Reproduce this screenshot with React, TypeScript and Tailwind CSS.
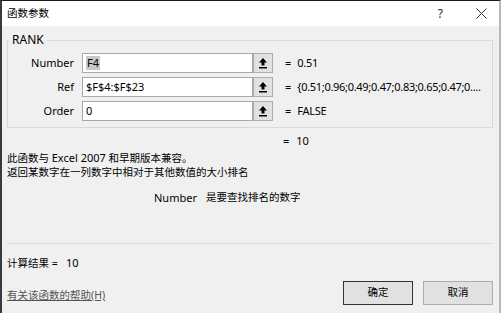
import React from "react";

const font = { fontFamily: '"Noto Sans", "Noto Sans CJK SC", sans-serif' };

function RefIcon() {
  return (
    <svg width="10" height="12" viewBox="0 0 10 12">
      <path d="M5 1 L9 5.5 L6.5 5.5 L6.5 8.5 L3.5 8.5 L3.5 5.5 L1 5.5 Z" fill="#000" />
      <rect x="1" y="10" width="8" height="1.5" fill="#000" />
    </svg>
  );
}

function Row({ label, value, result, selected }: { label: string; value: string; result: string; selected?: boolean }) {
  return (
    <div className="flex items-center h-[20px]">
      <div className="w-[66px] text-right text-[11px] text-black">{label}</div>
      <div className="ml-[8px] flex h-[20px] w-[171px] items-center border border-[#a8a8a8] bg-white pl-[3px] text-[11px] text-black">
        {selected ? <span className="bg-[#c8c8c8] px-[1px] leading-[14px]">{value}</span> : <span className="leading-[14px]">{value}</span>}
      </div>
      <div className="flex h-[20px] w-[20px] items-center justify-center border border-[#adadad] bg-[#e1e1e1]">
        <RefIcon />
      </div>
      <div className="ml-[12px] text-[11px] text-black">=</div>
      <div className="ml-[6px] text-[11px] tracking-[-0.3px] text-black whitespace-nowrap">{result}</div>
    </div>
  );
}

export default function App() {
  return (
    <div className="w-[501px] h-[313px] overflow-hidden bg-[#f0f0f0] border-t border-t-[#1a1a1a] border-l-2 border-l-[#3a3a3a] border-r-2 border-r-[#b8b8b8] flex flex-col text-black" style={font}>
      <div className="h-[25px] bg-white flex items-center pl-[5px] pr-[12px] text-[10.5px] shrink-0">
        <span>函数参数</span>
        <span className="ml-auto text-[12px] text-[#222]">?</span>
        <svg className="ml-[33px]" width="11" height="11" viewBox="0 0 11 11">
          <path d="M0.5 0.5 L10.5 10.5 M10.5 0.5 L0.5 10.5" stroke="#333" strokeWidth="1" />
        </svg>
      </div>
      <div className="flex-1 px-[5px] flex flex-col">
        <fieldset className="mt-[7px] border border-[#d9d9d9] pl-0 pr-0 pb-[6px] w-[486px]">
          <legend className="ml-[1px] px-[3px] text-[12px] leading-[14px]">RANK</legend>
          <div className="pt-[6px] flex flex-col gap-[4px]">
            <Row label="Number" value="F4" result="0.51" selected />
            <Row label="Ref" value="$F$4:$F$23" result="{0.51;0.96;0.49;0.47;0.83;0.65;0.47;0...." />
            <Row label="Order" value="0" result="FALSE" />
          </div>
        </fieldset>
        <div className="mt-[5px] flex text-[11px] h-[16px] items-center">
          <span className="ml-[276px]">=</span>
          <span className="ml-[7px]">10</span>
        </div>
        <div className="mt-[2px] text-[10.5px] leading-[14px]">此函数与 <span className="text-[11px]">Excel 2007</span> 和早期版本兼容。</div>
        <div className="text-[10.5px] leading-[14px]">返回某数字在一列数字中相对于其他数值的大小排名</div>
        <div className="mt-[11px] flex items-center text-[10.5px] leading-[15px]">
          <span className="ml-[147px] text-[11px]">Number</span>
          <span className="ml-[9px]">是要查找排名的数字</span>
        </div>
        <div className="mt-[38px] border-t border-[#d9d9d9] w-[486px]" />
        <div className="mt-[11px] text-[10.5px] leading-[15px]">
          计算结果 =&nbsp;&nbsp;&nbsp;<span className="text-[11px]">10</span>
        </div>
        <div className="mt-[10px] flex items-center">
          <span className="text-[10.5px] text-[#555] underline mt-[6px]">有关该函数的帮助(H)</span>
          <button className="ml-auto h-[24px] w-[70px] border border-[#333] bg-[#e1e1e1] text-[10.5px]">确定</button>
          <button className="ml-[10px] mr-[1px] h-[24px] w-[70px] border border-[#adadad] bg-[#e1e1e1] text-[10.5px]">取消</button>
        </div>
      </div>
    </div>
  );
}
